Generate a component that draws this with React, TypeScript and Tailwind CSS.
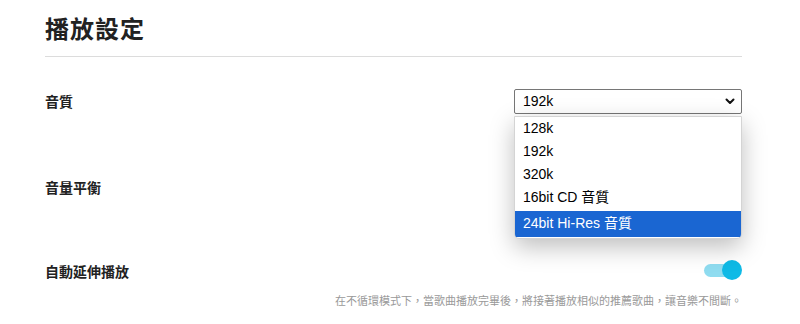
import { useState } from 'react'

const QUALITY_OPTIONS = ['128k', '192k', '320k', '16bit CD 音質', '24bit Hi-Res 音質']

const FONT = "font-['Liberation_Sans','Noto_Sans_CJK_TC',sans-serif]"

const Toggle = ({ on }: { on: boolean }) => (
  <div className="relative flex h-[20px] w-[40px] items-center">
    <div className={`ml-[2px] h-[13px] w-[36px] rounded-full ${on ? 'bg-[#8fdcf0]' : 'bg-gray-300'}`} />
    <div
      className={`absolute top-0 h-[20px] w-[20px] rounded-full ${on ? 'right-0 bg-[#0fbae6]' : 'left-0 bg-white shadow'}`}
    />
  </div>
)

const App = () => {
  const [quality] = useState('192k')
  const highlighted = '24bit Hi-Res 音質'

  return (
    <div className={`h-[324px] w-[800px] overflow-hidden bg-white text-[#222] ${FONT}`}>
      <div className="ml-[45px] w-[697px]">
        <h1 className="border-b border-[#dcdcdc] pt-[12px] pb-[8px] text-[24px] font-bold leading-[36px] tracking-[1px]">
          播放設定
        </h1>

        {/* 音質 */}
        <div className="relative z-10 mt-[31px] flex h-[26px] items-center justify-between">
          <span className="mt-[3px] text-[14px] font-bold">音質</span>
          <div className="relative w-[228px]">
            <div className="flex h-[25px] items-center justify-between rounded-[2px] border border-[#767676] bg-white pr-[6px] pl-[8px] text-[14px] text-black">
              <span>{quality}</span>
              <svg width="10" height="7" viewBox="0 0 10 7" fill="none">
                <path d="M1.5 1.5 L5 5 L8.5 1.5" stroke="#111" strokeWidth="2" strokeLinecap="round" strokeLinejoin="round" />
              </svg>
            </div>
            <ul className="absolute top-[27px] left-0 w-[228px] overflow-hidden rounded-b-[5px] border border-[#d4d4d4] bg-white pb-[1px] text-[14px] text-black shadow-[0_8px_24px_rgba(0,0,0,0.26)]">
              {QUALITY_OPTIONS.map((option) =>
                option === highlighted ? (
                  <li key={option} className="mt-[2px] flex h-[26px] items-center bg-[#1a66d2] pl-[8px] text-white">
                    {option}
                  </li>
                ) : (
                  <li key={option} className="flex h-[23px] items-center pl-[8px]">
                    {option}
                  </li>
                ),
              )}
            </ul>
          </div>
        </div>

        {/* 音量平衡 */}
        <div className="mt-[59px] flex h-[26px] items-center justify-between">
          <span className="mt-[5px] text-[14px] font-bold">音量平衡</span>
          <Toggle on />
        </div>

        {/* 自動延伸播放 */}
        <div className="mt-[58px] flex h-[26px] items-center justify-between">
          <span className="mt-[5px] text-[14px] font-bold">自動延伸播放</span>
          <Toggle on />
        </div>
        <p className="mt-[11px] text-right text-[11px] leading-[14px] text-[#999]">
          在不循環模式下，當歌曲播放完畢後，將接著播放相似的推薦歌曲，讓音樂不間斷。
        </p>
      </div>
    </div>
  )
}

export default App
